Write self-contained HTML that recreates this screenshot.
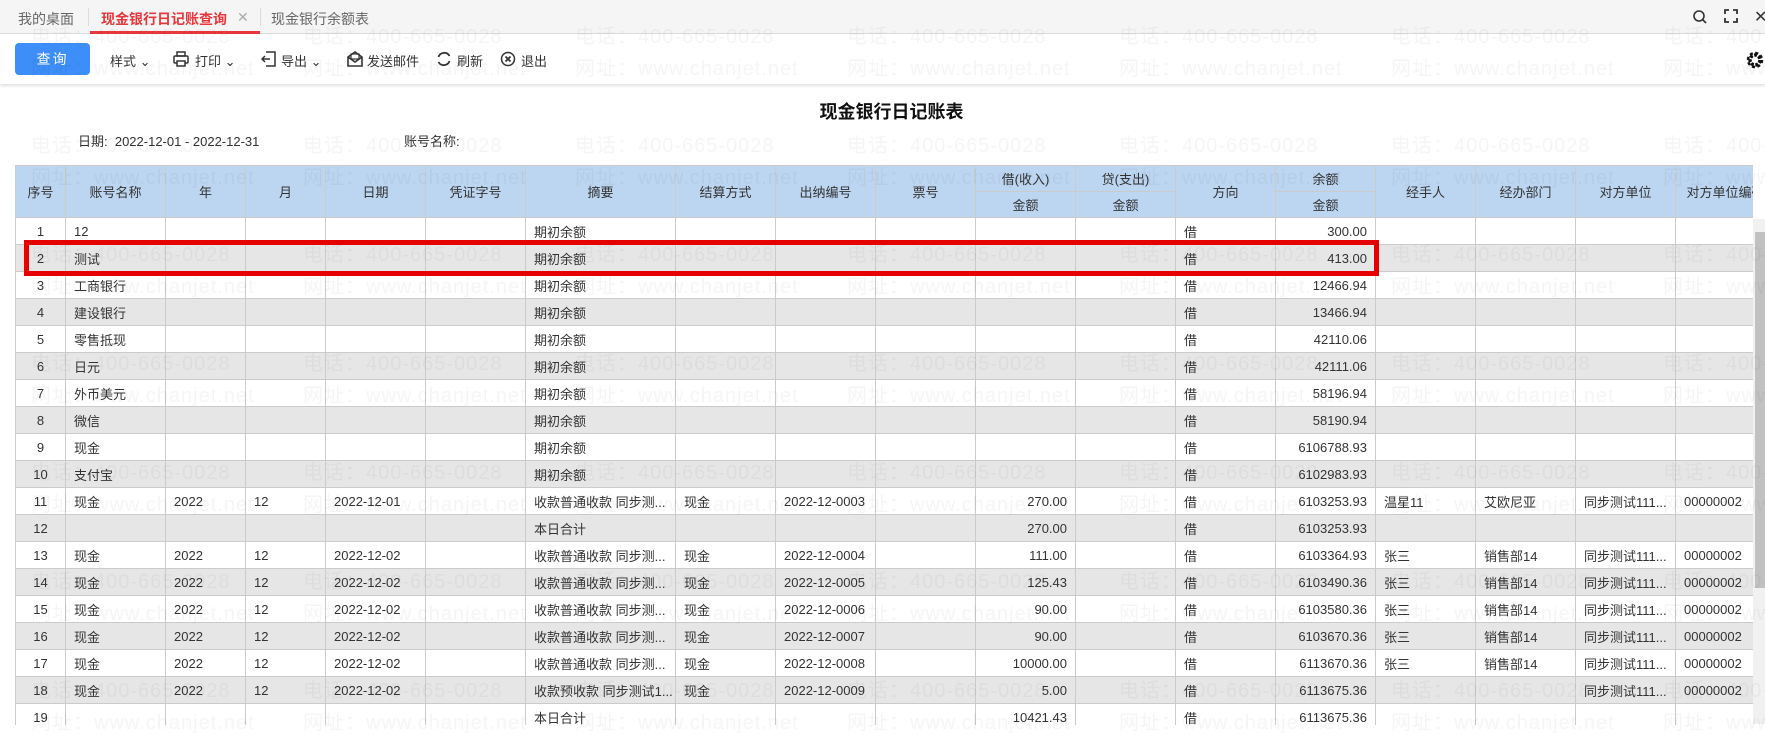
<!DOCTYPE html>
<html><head><meta charset="utf-8"><style>
*{margin:0;padding:0;box-sizing:border-box}
body{width:1765px;height:724px;overflow:hidden;background:#fff;font-family:"Liberation Sans","Noto Sans CJK SC",sans-serif;color:#333;position:relative}
.tabs{position:absolute;left:0;top:0;width:1765px;height:34px;background:#f5f5f5;border-bottom:1px solid #ddd}
.tab{position:absolute;top:9px;font-size:14px;color:#666}
.tb{position:absolute;left:0;top:34px;width:1765px;height:50px;background:#fff;box-shadow:0 2px 3px rgba(0,0,0,.12)}
.btn{position:absolute;left:15px;top:9px;width:75px;height:32px;background:#3d8ef8;border-radius:4px;color:#fff;font-size:14px;text-align:center;line-height:32px;letter-spacing:2px}
.ti{position:absolute;top:17px;font-size:13px;color:#333}
.title{position:absolute;left:9px;width:1765px;top:98px;text-align:center;font-size:18px;font-weight:bold;color:#111}
.info{position:absolute;top:131px;font-size:13px}
.grid{position:absolute;left:15px;top:165px;width:1738px;height:560px;overflow:hidden}
table{border-collapse:collapse;table-layout:fixed;width:1760px;font-size:13px}
td,th{border:1px solid #cbcbcb;white-space:nowrap;overflow:hidden;padding:0 8px;height:27px;font-weight:normal}
th{background:#bcd5f1;height:26px;text-align:center;color:#333}
tr:nth-child(even) td{background:#e6e6e6}
td.c{text-align:center;padding:0}
td.r{text-align:right}
.red{position:absolute;left:24px;top:240px;width:1355px;height:36px;border:5px solid #e60000}
.sb{position:absolute;left:1753px;top:219px;width:12px;height:505px;background:#f1f1f1}
.thumb{position:absolute;left:1755px;top:232px;width:10px;height:356px;background:#c1c1c1}
.wm{position:absolute;font-size:20px;color:rgba(0,0,0,.04);letter-spacing:1px;white-space:nowrap;pointer-events:none}
</style></head><body>
<div class="tabs">
<span class="tab" style="left:18px">我的桌面</span>
<span style="position:absolute;left:88px;top:8px;width:1px;height:18px;background:#ddd"></span>
<span class="tab" style="left:101px;color:#e8383d;font-weight:bold">现金银行日记账查询</span>
<span class="tab" style="left:237px;color:#aaa">✕</span>
<span style="position:absolute;left:90px;top:31px;width:170px;height:3px;background:#e8383d"></span>
<span style="position:absolute;left:260px;top:8px;width:1px;height:18px;background:#ddd"></span>
<span class="tab" style="left:271px">现金银行余额表</span>
<svg style="position:absolute;left:1692px;top:9px" width="16" height="16" viewBox="0 0 16 16"><circle cx="7" cy="7" r="5" fill="none" stroke="#333" stroke-width="1.6"/><path d="M10.5 10.5L14 14" stroke="#333" stroke-width="1.6"/></svg>
<svg style="position:absolute;left:1724px;top:9px" width="14" height="14" viewBox="0 0 14 14"><path d="M1 5V1h4M9 1h4v4M13 9v4H9M5 13H1V9" fill="none" stroke="#333" stroke-width="1.8"/></svg>
<span style="position:absolute;left:1754px;top:7px;font-size:16px;color:#333">✕</span>
</div>
<div class="tb">
<div class="btn">查询</div>
<span class="ti" style="left:110px">样式 ⌄</span>
<svg style="position:absolute;left:173px;top:17px" width="16" height="16" viewBox="0 0 16 16"><rect x="4" y="1" width="8" height="4" fill="none" stroke="#333" stroke-width="1.5"/><rect x="1" y="5" width="14" height="7" rx="1" fill="none" stroke="#333" stroke-width="1.5"/><rect x="4" y="10" width="8" height="5" fill="#fff" stroke="#333" stroke-width="1.5"/></svg>
<span class="ti" style="left:195px">打印 ⌄</span>
<svg style="position:absolute;left:261px;top:17px" width="15" height="16" viewBox="0 0 15 16"><path d="M5 1h9v14H5M1 8h8M4 5L1 8l3 3" fill="none" stroke="#333" stroke-width="1.5"/></svg>
<span class="ti" style="left:281px">导出 ⌄</span>
<svg style="position:absolute;left:347px;top:16px" width="16" height="17" viewBox="0 0 16 17"><path d="M1 7l7-5 7 5v9H1z M1 7l7 5 7-5" fill="none" stroke="#333" stroke-width="1.6"/><rect x="4" y="4" width="8" height="5" fill="none" stroke="#333" stroke-width="1.2"/></svg>
<span class="ti" style="left:367px">发送邮件</span>
<svg style="position:absolute;left:436px;top:17px" width="16" height="16" viewBox="0 0 16 16"><path d="M13.5 5A6 6 0 0 0 2.5 6M2.5 11a6 6 0 0 0 11-1" fill="none" stroke="#333" stroke-width="1.8"/></svg>
<span class="ti" style="left:457px">刷新</span>
<svg style="position:absolute;left:500px;top:17px" width="16" height="16" viewBox="0 0 16 16"><circle cx="8" cy="8" r="6.5" fill="none" stroke="#333" stroke-width="1.5"/><path d="M5.5 5.5l5 5M10.5 5.5l-5 5" stroke="#333" stroke-width="1.8"/></svg>
<span class="ti" style="left:521px">退出</span>
<svg style="position:absolute;left:1745px;top:16px" width="20" height="20" viewBox="0 0 20 20"><circle cx="10" cy="10" r="5" fill="none" stroke="#111" stroke-width="3.5" stroke-dasharray="3 1.5"/><circle cx="10" cy="10" r="7" fill="none" stroke="#111" stroke-width="2.5" stroke-dasharray="3 2.5"/></svg>
</div>
<div class="title">现金银行日记账表</div>
<span class="info" style="left:78px">日期:&nbsp; 2022-12-01 - 2022-12-31</span>
<span class="info" style="left:404px">账号名称:</span>
<div class="grid"><table>
<colgroup><col style="width:50px"><col style="width:100px"><col style="width:80px"><col style="width:80px"><col style="width:100px"><col style="width:100px"><col style="width:150px"><col style="width:100px"><col style="width:100px"><col style="width:100px"><col style="width:100px"><col style="width:100px"><col style="width:100px"><col style="width:100px"><col style="width:100px"><col style="width:100px"><col style="width:100px"><col style="width:100px"></colgroup>
<thead>
<tr><th rowspan="2">序号</th><th rowspan="2">账号名称</th><th rowspan="2">年</th><th rowspan="2">月</th><th rowspan="2">日期</th><th rowspan="2">凭证字号</th><th rowspan="2">摘要</th><th rowspan="2">结算方式</th><th rowspan="2">出纳编号</th><th rowspan="2">票号</th><th>借(收入)</th><th>贷(支出)</th><th rowspan="2">方向</th><th>余额</th><th rowspan="2">经手人</th><th rowspan="2">经办部门</th><th rowspan="2">对方单位</th><th rowspan="2">对方单位编码</th></tr>
<tr><th>金额</th><th>金额</th><th>金额</th></tr>
</thead>
<tbody>
<tr><td class="c">1</td><td>12</td><td></td><td></td><td></td><td></td><td>期初余额</td><td></td><td></td><td></td><td></td><td></td><td>借</td><td class="r">300.00</td><td></td><td></td><td></td><td></td></tr>
<tr><td class="c">2</td><td>测试</td><td></td><td></td><td></td><td></td><td>期初余额</td><td></td><td></td><td></td><td></td><td></td><td>借</td><td class="r">413.00</td><td></td><td></td><td></td><td></td></tr>
<tr><td class="c">3</td><td>工商银行</td><td></td><td></td><td></td><td></td><td>期初余额</td><td></td><td></td><td></td><td></td><td></td><td>借</td><td class="r">12466.94</td><td></td><td></td><td></td><td></td></tr>
<tr><td class="c">4</td><td>建设银行</td><td></td><td></td><td></td><td></td><td>期初余额</td><td></td><td></td><td></td><td></td><td></td><td>借</td><td class="r">13466.94</td><td></td><td></td><td></td><td></td></tr>
<tr><td class="c">5</td><td>零售抵现</td><td></td><td></td><td></td><td></td><td>期初余额</td><td></td><td></td><td></td><td></td><td></td><td>借</td><td class="r">42110.06</td><td></td><td></td><td></td><td></td></tr>
<tr><td class="c">6</td><td>日元</td><td></td><td></td><td></td><td></td><td>期初余额</td><td></td><td></td><td></td><td></td><td></td><td>借</td><td class="r">42111.06</td><td></td><td></td><td></td><td></td></tr>
<tr><td class="c">7</td><td>外币美元</td><td></td><td></td><td></td><td></td><td>期初余额</td><td></td><td></td><td></td><td></td><td></td><td>借</td><td class="r">58196.94</td><td></td><td></td><td></td><td></td></tr>
<tr><td class="c">8</td><td>微信</td><td></td><td></td><td></td><td></td><td>期初余额</td><td></td><td></td><td></td><td></td><td></td><td>借</td><td class="r">58190.94</td><td></td><td></td><td></td><td></td></tr>
<tr><td class="c">9</td><td>现金</td><td></td><td></td><td></td><td></td><td>期初余额</td><td></td><td></td><td></td><td></td><td></td><td>借</td><td class="r">6106788.93</td><td></td><td></td><td></td><td></td></tr>
<tr><td class="c">10</td><td>支付宝</td><td></td><td></td><td></td><td></td><td>期初余额</td><td></td><td></td><td></td><td></td><td></td><td>借</td><td class="r">6102983.93</td><td></td><td></td><td></td><td></td></tr>
<tr><td class="c">11</td><td>现金</td><td>2022</td><td>12</td><td>2022-12-01</td><td></td><td>收款普通收款 同步测...</td><td>现金</td><td>2022-12-0003</td><td></td><td class="r">270.00</td><td></td><td>借</td><td class="r">6103253.93</td><td>温星11</td><td>艾欧尼亚</td><td>同步测试111...</td><td>00000002</td></tr>
<tr><td class="c">12</td><td></td><td></td><td></td><td></td><td></td><td>本日合计</td><td></td><td></td><td></td><td class="r">270.00</td><td></td><td>借</td><td class="r">6103253.93</td><td></td><td></td><td></td><td></td></tr>
<tr><td class="c">13</td><td>现金</td><td>2022</td><td>12</td><td>2022-12-02</td><td></td><td>收款普通收款 同步测...</td><td>现金</td><td>2022-12-0004</td><td></td><td class="r">111.00</td><td></td><td>借</td><td class="r">6103364.93</td><td>张三</td><td>销售部14</td><td>同步测试111...</td><td>00000002</td></tr>
<tr><td class="c">14</td><td>现金</td><td>2022</td><td>12</td><td>2022-12-02</td><td></td><td>收款普通收款 同步测...</td><td>现金</td><td>2022-12-0005</td><td></td><td class="r">125.43</td><td></td><td>借</td><td class="r">6103490.36</td><td>张三</td><td>销售部14</td><td>同步测试111...</td><td>00000002</td></tr>
<tr><td class="c">15</td><td>现金</td><td>2022</td><td>12</td><td>2022-12-02</td><td></td><td>收款普通收款 同步测...</td><td>现金</td><td>2022-12-0006</td><td></td><td class="r">90.00</td><td></td><td>借</td><td class="r">6103580.36</td><td>张三</td><td>销售部14</td><td>同步测试111...</td><td>00000002</td></tr>
<tr><td class="c">16</td><td>现金</td><td>2022</td><td>12</td><td>2022-12-02</td><td></td><td>收款普通收款 同步测...</td><td>现金</td><td>2022-12-0007</td><td></td><td class="r">90.00</td><td></td><td>借</td><td class="r">6103670.36</td><td>张三</td><td>销售部14</td><td>同步测试111...</td><td>00000002</td></tr>
<tr><td class="c">17</td><td>现金</td><td>2022</td><td>12</td><td>2022-12-02</td><td></td><td>收款普通收款 同步测...</td><td>现金</td><td>2022-12-0008</td><td></td><td class="r">10000.00</td><td></td><td>借</td><td class="r">6113670.36</td><td>张三</td><td>销售部14</td><td>同步测试111...</td><td>00000002</td></tr>
<tr><td class="c">18</td><td>现金</td><td>2022</td><td>12</td><td>2022-12-02</td><td></td><td>收款预收款 同步测试1...</td><td>现金</td><td>2022-12-0009</td><td></td><td class="r">5.00</td><td></td><td>借</td><td class="r">6113675.36</td><td></td><td></td><td>同步测试111...</td><td>00000002</td></tr>
<tr><td class="c">19</td><td></td><td></td><td></td><td></td><td></td><td>本日合计</td><td></td><td></td><td></td><td class="r">10421.43</td><td></td><td>借</td><td class="r">6113675.36</td><td></td><td></td><td></td><td></td></tr>
</tbody></table></div>
<div class="sb"></div><div class="thumb"></div>
<div class="red"></div>
<div id="wm"></div>
<script>
var h='';var xs=[31,303,575,847,1119,1391,1663];var ys=[20,129,238,347,456,565,674];
ys.forEach(function(y){xs.forEach(function(x){h+='<div class="wm" style="left:'+x+'px;top:'+y+'px">电话：400-665-0028</div><div class="wm" style="left:'+x+'px;top:'+(y+32)+'px">网址：www.chanjet.net</div>';});});
document.getElementById('wm').innerHTML=h;
</script>
</body></html>
